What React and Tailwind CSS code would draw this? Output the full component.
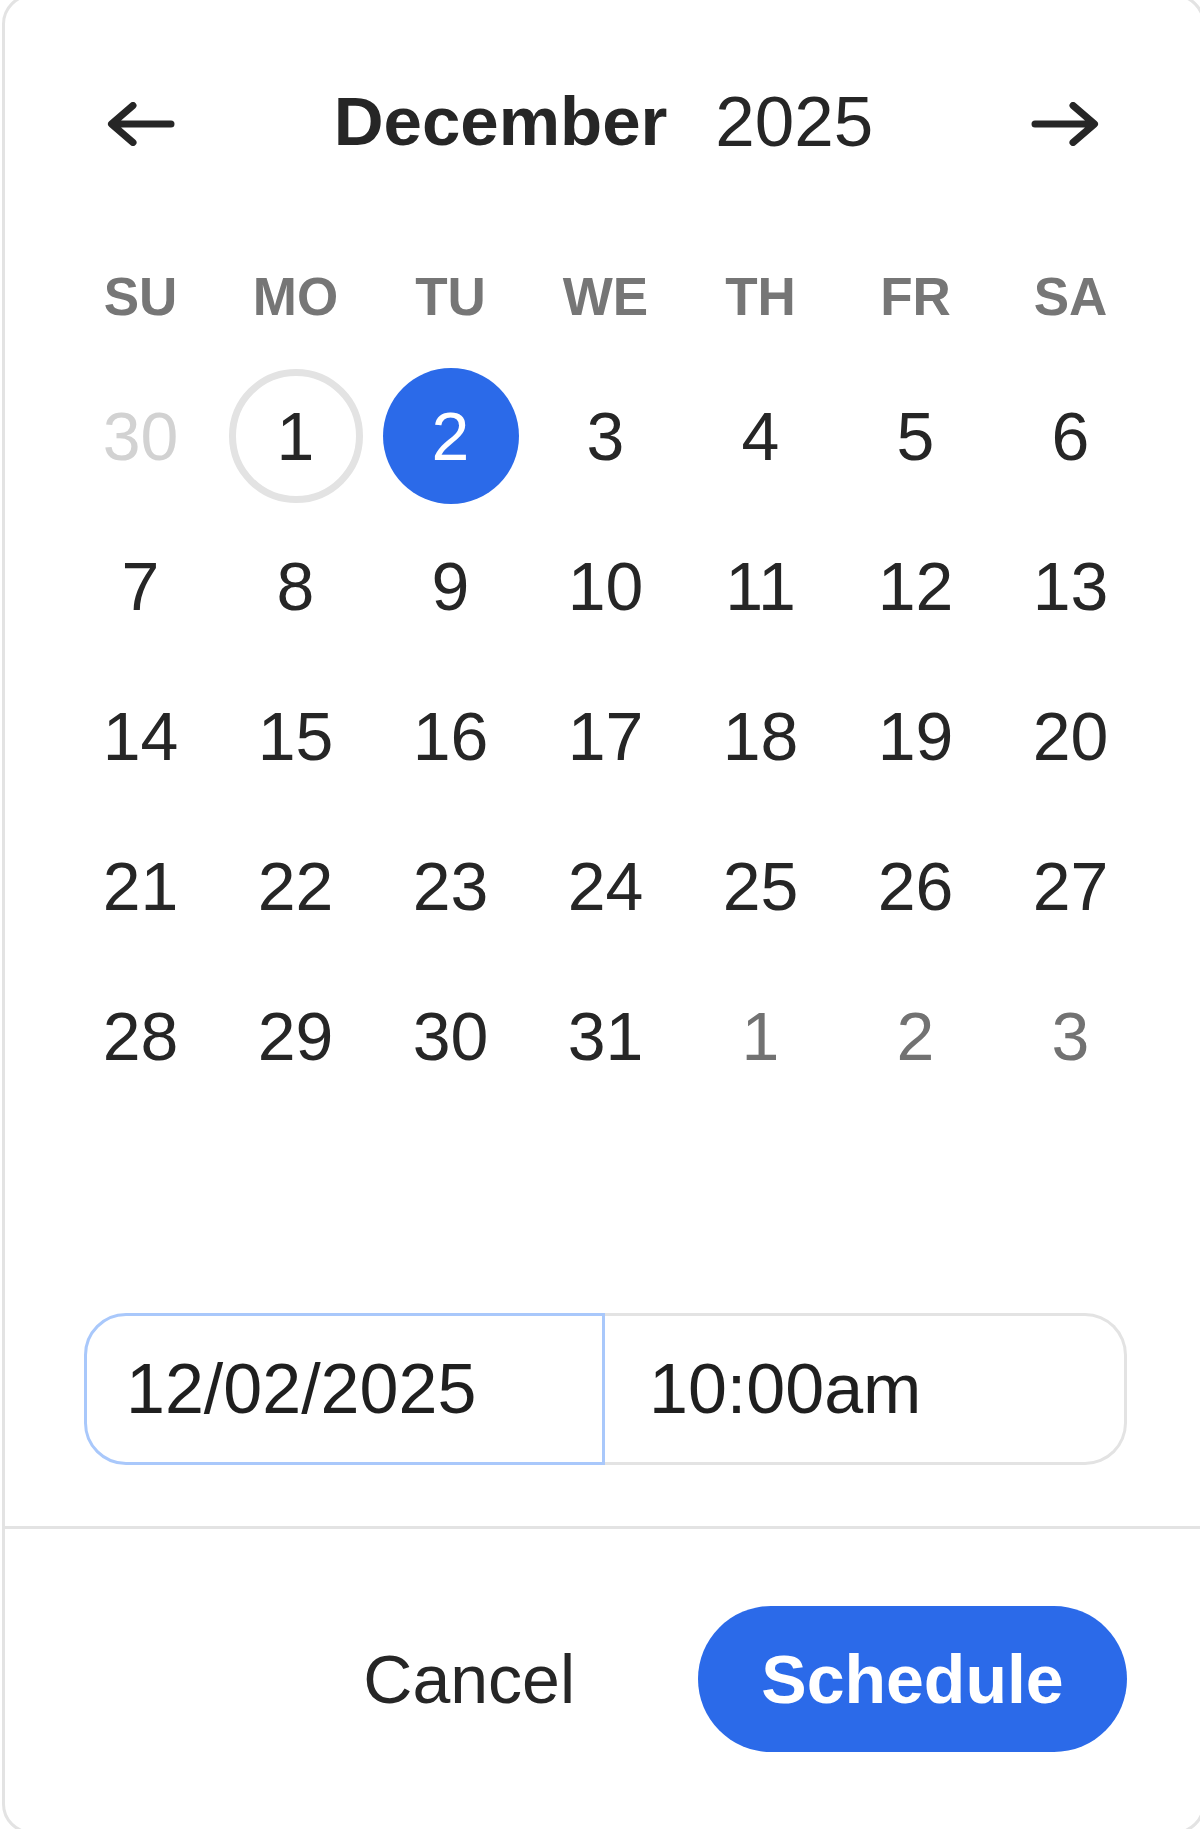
import React from "react";

function Arrow({ dir }) {
  return (
    <svg width="68" height="44" viewBox="0 0 68 44" className="mt-[6px]" style={dir === "right" ? { transform: "scaleX(-1)" } : undefined}>
      <path d="M64 22 H5 M26 3.5 L4.5 22 L26 40.5" fill="none" stroke="#262626" strokeWidth="7" strokeLinecap="round" strokeLinejoin="round" />
    </svg>
  );
}

const DOW = ["SU", "MO", "TU", "WE", "TH", "FR", "SA"];

const weeks = [
  [["30", "prev"], ["1", "today"], ["2", "sel"], ["3"], ["4"], ["5"], ["6"]],
  [["7"], ["8"], ["9"], ["10"], ["11"], ["12"], ["13"]],
  [["14"], ["15"], ["16"], ["17"], ["18"], ["19"], ["20"]],
  [["21"], ["22"], ["23"], ["24"], ["25"], ["26"], ["27"]],
  [["28"], ["29"], ["30"], ["31"], ["1", "next"], ["2", "next"], ["3", "next"]],
];

function Day({ label, type }) {
  if (type === "sel") {
    return (
      <div className="w-[136px] h-[136px] rounded-full bg-[#2b6ae9] text-white flex items-center justify-center leading-none">
        {label}
      </div>
    );
  }
  if (type === "today") {
    return (
      <div className="w-[134px] h-[134px] rounded-full border-[7px] border-[#e3e3e3] text-[#262626] flex items-center justify-center leading-none">
        {label}
      </div>
    );
  }
  if (type === "prev") {
    return <span className="text-[#d2d2d2] leading-none">{label}</span>;
  }
  if (type === "next") {
    return <span className="text-[#727272] leading-none">{label}</span>;
  }
  return <span className="text-[#262626] leading-none">{label}</span>;
}

export default function App() {
  return (
    <div className="w-[1200px] h-[1829px] overflow-hidden bg-white font-['Liberation_Sans',Arial,sans-serif]">
      <div className="mt-[-6px] ml-[2px] w-[1203px] h-[1840px] border-[3px] border-[#e3e3e3] rounded-[30px] bg-white flex flex-col">
        <div className="pt-[64px] pl-[58px] pb-[61px]">
          {/* header */}
          <div className="w-[1085px] h-[120px] flex items-center">
            <div className="w-[155px] flex justify-center">
              <Arrow dir="left" />
            </div>
            <div className="flex-1 flex justify-center items-center gap-[48px] text-[69px] leading-none text-[#262626] pr-[4px]">
              <span className="font-bold">December</span>
              <span className="text-[71px]">2025</span>
            </div>
            <div className="w-[155px] flex justify-center pr-[11px]">
              <Arrow dir="right" />
            </div>
          </div>

          {/* day of week */}
          <div className="mt-[65px] w-[1085px] h-[100px] grid grid-cols-7">
            {DOW.map((d) => (
              <div key={d} className="flex items-center justify-center text-[53px] font-bold text-[#767676] leading-none">
                {d}
              </div>
            ))}
          </div>

          {/* days */}
          <div className="mt-[15px] w-[1085px] flex flex-col">
            {weeks.map((w, i) => (
              <div key={i} className="h-[150px] grid grid-cols-7">
                {w.map(([label, type], j) => (
                  <div key={j} className="flex items-center justify-center text-[68px]">
                    <Day label={label} type={type} />
                  </div>
                ))}
              </div>
            ))}
          </div>

          {/* inputs */}
          <div className="mt-[202px] ml-[21px] flex h-[152px] text-[70px] text-[#1f1f1f] leading-none">
            <div className="w-[521px] h-full border-[3px] border-[#a9c8fb] rounded-l-[42px] flex items-center pl-[39px]">
              12/02/2025
            </div>
            <div className="w-[522px] h-full border-[3px] border-l-0 border-[#e3e3e3] rounded-r-[42px] flex items-center pl-[44px]">
              10:00am
            </div>
          </div>
        </div>

        {/* footer */}
        <div className="border-t-[3px] border-[#e3e3e3] pt-[77px] pr-[75px] flex justify-end items-start">
          <div className="h-[146px] flex items-center mr-[123px] text-[68px] text-[#262626] leading-none">
            Cancel
          </div>
          <div className="w-[429px] h-[146px] rounded-full bg-[#2b6ae9] text-white font-bold text-[68px] leading-none flex items-center justify-center">
            Schedule
          </div>
        </div>
      </div>
    </div>
  );
}
